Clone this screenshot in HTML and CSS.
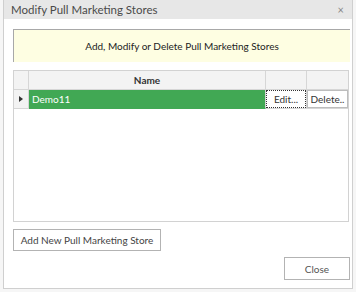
FILE: index.html
```html
<!DOCTYPE html>
<html lang="en">
<head>
    <meta charset="UTF-8">
    <title>Modify Pull Marketing Stores</title>
    <link rel="stylesheet" href="styles.css">
</head>
<body>
    <div class="window">
        <div class="title-bar">
            <span class="title">Modify Pull Marketing Stores</span>
            <span class="close-x">&times;</span>
        </div>
        <div class="content">
            <div class="banner">Add, Modify or Delete Pull Marketing Stores</div>

            <!-- Stores grid -->
            <div class="grid">
                <div class="grid-row header">
                    <div class="cell indicator"></div>
                    <div class="cell name">Name</div>
                    <div class="cell btn-col"></div>
                    <div class="cell btn-col last"></div>
                </div>
                <div class="grid-row">
                    <div class="cell indicator"><span class="arrow"></span></div>
                    <div class="cell name selected">Demo11</div>
                    <div class="cell btn-col"><div class="cell-btn focused">Edit...</div></div>
                    <div class="cell btn-col last"><div class="cell-btn">Delete..</div></div>
                </div>
            </div>

            <div class="button add-btn">Add New Pull Marketing Store</div>
            <div class="footer">
                <div class="button close-btn">Close</div>
            </div>
        </div>
    </div>
</body>
</html>
```

FILE: styles.css
```css
body {
    margin: 0;
    padding: 0;
    background-color: #f6f6f6;
    font-family: Lato, "Noto Sans", Arial, sans-serif;
    color: #333;
    white-space: nowrap;
}

.window {
    width: 348px;
    height: 288px;
    margin-left: 3px;
    border: 1px solid #cfcfcf;
    border-top: none;
    background-color: #fff;
    display: flex;
    flex-direction: column;
}

.title-bar {
    height: 19px;
    background-color: #e7e7e7;
    display: flex;
    align-items: center;
    justify-content: space-between;
    padding: 0 8px 0 7px;
}

.title {
    font-size: 11.5px;
    color: #4a4a4a;
    line-height: 19px;
}

.close-x {
    font-size: 11px;
    color: #888;
}

.content {
    flex: 1;
    padding: 10px 2px 0 9px;
    display: flex;
    flex-direction: column;
}

.banner {
    height: 32px;
    background-color: #fefee2;
    border-top: 1px solid #a8a8a8;
    border-left: 1px solid #a8a8a8;
    display: flex;
    align-items: center;
    justify-content: center;
    font-size: 10px;
    color: #222;
}

.grid {
    margin-top: 8px;
    margin-right: 1px;
    height: 150px;
    border: 1px solid #d2d2d2;
}

.grid-row {
    display: flex;
    height: 19px;
}

.cell {
    box-sizing: border-box;
    height: 19px;
    border-right: 1px solid #d6d6d6;
    border-bottom: 1px solid #d6d6d6;
    font-size: 10px;
    display: flex;
    align-items: center;
}

.header .cell {
    background-color: #f3f3f3;
}

.header .name {
    justify-content: center;
    font-weight: bold;
    color: #333;
}

.indicator {
    width: 15px;
    background-color: #f3f3f3;
    justify-content: center;
}

.arrow {
    width: 0;
    height: 0;
    border-top: 3px solid transparent;
    border-bottom: 3px solid transparent;
    border-left: 4px solid #333;
}

.name {
    width: 237px;
}

.name.selected {
    background-color: #41a854;
    color: #fff;
    padding-left: 3px;
    border-bottom-color: #41a854;
}

.btn-col {
    width: 41px;
}

.btn-col.last {
    width: 41px;
    border-right: none;
}

.cell-btn {
    box-sizing: border-box;
    width: 100%;
    height: 100%;
    border: 1px solid #bdbdbd;
    background-color: #fff;
    display: flex;
    align-items: center;
    justify-content: center;
    font-size: 10px;
    color: #333;
}

.cell-btn.focused {
    border: 1px dotted #333;
}

.button {
    box-sizing: border-box;
    border: 1px solid #b3b3b3;
    background-color: #fff;
    font-size: 10px;
    color: #444;
    display: flex;
    align-items: center;
    justify-content: center;
}

.add-btn {
    margin-top: 7px;
    width: 148px;
    height: 22px;
}

.footer {
    display: flex;
    justify-content: flex-end;
    margin-top: 6px;
}

.close-btn {
    width: 66px;
    height: 23px;
    color: #555;
}
```
